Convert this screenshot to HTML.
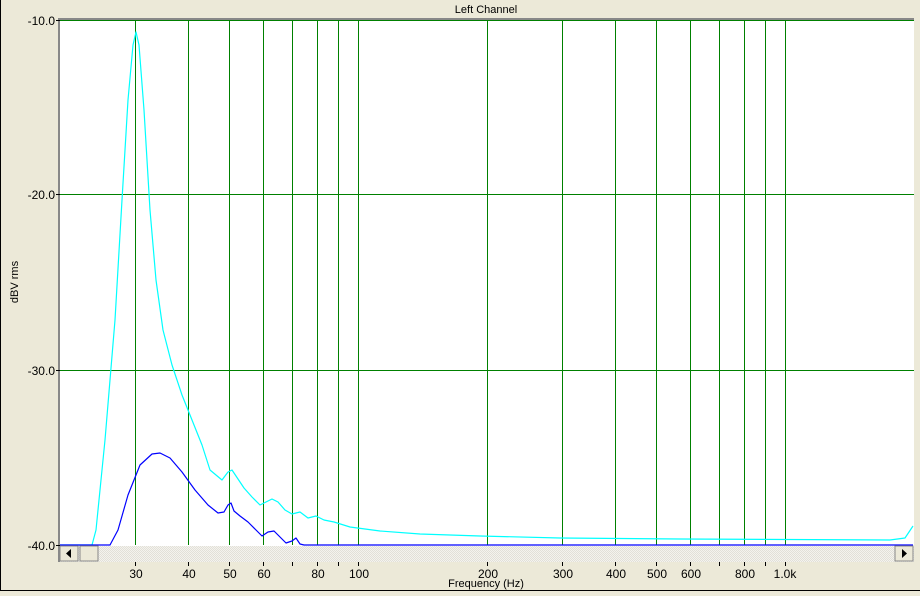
<!DOCTYPE html><html><head><style>
body{margin:0;width:920px;height:591px;background:#ece9d8;overflow:hidden;font-family:"Liberation Sans",sans-serif;}
</style></head><body>
<svg width="920" height="591" xmlns="http://www.w3.org/2000/svg" font-family="Liberation Sans, sans-serif">
<defs><pattern id="h" width="2" height="2" patternUnits="userSpaceOnUse"><rect width="2" height="2" fill="#f4f3ee"/><rect width="1" height="1" fill="#e2e0d8"/><rect x="1" y="1" width="1" height="1" fill="#e2e0d8"/></pattern></defs>
<rect x="0" y="0" width="920" height="591" fill="#ece9d8"/>
<rect x="0" y="0" width="1" height="591" fill="#000"/>
<rect x="0" y="590" width="920" height="1" fill="#000"/>
<text x="486" y="13" font-size="11" text-anchor="middle">Left Channel</text>
<rect x="58" y="18" width="856" height="544" fill="#888"/>
<rect x="60" y="20" width="854" height="526" fill="#fff"/>
<g stroke="#008000" stroke-width="1">
<line x1="60" y1="20.5" x2="914" y2="20.5"/>
<line x1="60" y1="194.5" x2="914" y2="194.5"/>
<line x1="60" y1="370.5" x2="914" y2="370.5"/>
<line x1="135.5" y1="20" x2="135.5" y2="545"/><line x1="188.5" y1="20" x2="188.5" y2="545"/>
<line x1="229.5" y1="20" x2="229.5" y2="545"/><line x1="263.5" y1="20" x2="263.5" y2="545"/>
<line x1="292.5" y1="20" x2="292.5" y2="545"/><line x1="317.5" y1="20" x2="317.5" y2="545"/>
<line x1="338.5" y1="20" x2="338.5" y2="545"/><line x1="358.5" y1="20" x2="358.5" y2="545"/>
<line x1="487.5" y1="20" x2="487.5" y2="545"/><line x1="562.5" y1="20" x2="562.5" y2="545"/>
<line x1="615.5" y1="20" x2="615.5" y2="545"/><line x1="656.5" y1="20" x2="656.5" y2="545"/>
<line x1="690.5" y1="20" x2="690.5" y2="545"/><line x1="719.5" y1="20" x2="719.5" y2="545"/>
<line x1="744.5" y1="20" x2="744.5" y2="545"/><line x1="765.5" y1="20" x2="765.5" y2="545"/>
<line x1="785.5" y1="20" x2="785.5" y2="545"/>
</g>
<path d="M60 545 L92 545 L96 530 L105 440 L115 320 L122 200 L128 100 L133 45 L136 32 L139 45 L144 110 L150 210 L156 280 L163 330 L172 365 L182 395 L192 420 L202 445 L210 470 L222 480 L228 472 L232 470 L236 476 L244 488 L252 497 L260 505 L266 502 L272 499 L278 502 L285 510 L292 514 L300 512 L308 518 L316 516 L324 520 L334 522 L350 527 L380 531 L420 534 L480 536 L560 538 L680 539 L890 540 L905 538 L913 526" fill="none" stroke="#00ffff" stroke-width="1.2" stroke-linejoin="round"/>
<path d="M60 545 L110 545 L118 530 L128 495 L140 465 L152 454 L160 453 L170 458 L182 472 L195 490 L208 505 L218 513 L224 512 L228 505 L231 503 L234 511 L240 516 L248 522 L256 530 L262 536 L268 532 L274 531 L280 537 L286 543 L292 541 L296 538 L300 544 L304 545 L913 545" fill="none" stroke="#0000ff" stroke-width="1.2" stroke-linejoin="round"/>
<rect x="60" y="546" width="854" height="16" fill="url(#h)"/>
<g><rect x="60" y="546" width="18" height="15" fill="#ece9d8" stroke="#888" stroke-width="1"/><path d="M71 549 L66 553.5 L71 558Z" fill="#000"/>
<rect x="80" y="546" width="18" height="15" fill="#ece9d8" stroke="#888" stroke-width="1"/>
<rect x="895" y="546" width="18" height="15" fill="#ece9d8" stroke="#888" stroke-width="1"/><path d="M902 549 L907 553.5 L902 558Z" fill="#000"/></g>
<g font-size="12" text-anchor="end"><text x="55" y="25">-10.0</text><text x="55" y="199">-20.0</text><text x="55" y="375">-30.0</text><text x="55" y="550">-40.0</text></g>
<g stroke="#000"><line x1="56" y1="20.5" x2="60" y2="20.5"/><line x1="56" y1="194.5" x2="60" y2="194.5"/><line x1="56" y1="370.5" x2="60" y2="370.5"/><line x1="56" y1="545.5" x2="60" y2="545.5"/></g>
<g stroke="#000"><line x1="135.5" y1="562" x2="135.5" y2="566"/><line x1="188.5" y1="562" x2="188.5" y2="566"/><line x1="229.5" y1="562" x2="229.5" y2="566"/><line x1="263.5" y1="562" x2="263.5" y2="566"/><line x1="292.5" y1="562" x2="292.5" y2="566"/><line x1="317.5" y1="562" x2="317.5" y2="566"/><line x1="338.5" y1="562" x2="338.5" y2="566"/><line x1="358.5" y1="562" x2="358.5" y2="566"/><line x1="487.5" y1="562" x2="487.5" y2="566"/><line x1="562.5" y1="562" x2="562.5" y2="566"/><line x1="615.5" y1="562" x2="615.5" y2="566"/><line x1="656.5" y1="562" x2="656.5" y2="566"/><line x1="690.5" y1="562" x2="690.5" y2="566"/><line x1="719.5" y1="562" x2="719.5" y2="566"/><line x1="744.5" y1="562" x2="744.5" y2="566"/><line x1="765.5" y1="562" x2="765.5" y2="566"/><line x1="785.5" y1="562" x2="785.5" y2="566"/></g>
<g font-size="12" text-anchor="middle"><text x="136" y="578">30</text><text x="189" y="578">40</text><text x="230" y="578">50</text><text x="264" y="578">60</text><text x="318" y="578">80</text><text x="359" y="578">100</text><text x="488" y="578">200</text><text x="563" y="578">300</text><text x="616" y="578">400</text><text x="657" y="578">500</text><text x="691" y="578">600</text><text x="745" y="578">800</text><text x="785" y="578">1.0k</text></g>
<text x="486" y="587" font-size="11" text-anchor="middle">Frequency (Hz)</text>
<text x="0" y="0" font-size="11" text-anchor="middle" transform="translate(18,282) rotate(-90)">dBV rms</text>
</svg>
</body></html>
